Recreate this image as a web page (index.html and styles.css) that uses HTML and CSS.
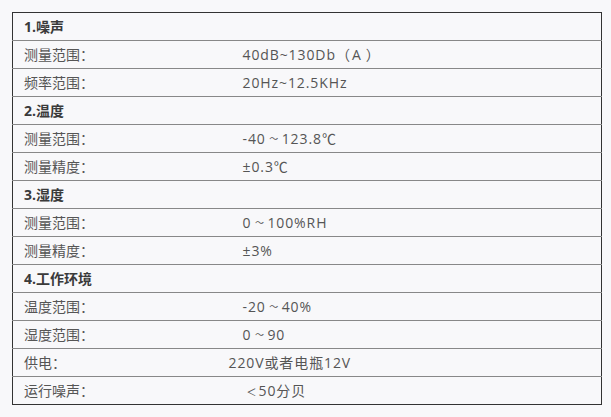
FILE: index.html
```html
<!DOCTYPE html>
<html lang="zh-CN">
<head>
<meta charset="utf-8">
<title>技术参数</title>
<link rel="stylesheet" href="styles.css">
</head>
<body>
<table class="spec">
  <colgroup><col class="c-label"><col class="c-value"></colgroup>
  <tr class="head"><td colspan="2">1.噪声</td></tr>
  <tr><td>测量范围：</td><td class="val">40dB~130Db<span class="po">（</span>A<span class="pc">）</span></td></tr>
  <tr><td>频率范围：</td><td class="val">20Hz~12.5KHz</td></tr>
  <tr class="head"><td colspan="2">2.温度</td></tr>
  <tr><td>测量范围：</td><td class="val">-40<span class="t">～</span>123.8℃</td></tr>
  <tr><td>测量精度：</td><td class="val">±0.3℃</td></tr>
  <tr class="head"><td colspan="2">3.湿度</td></tr>
  <tr><td>测量范围：</td><td class="val">0<span class="t">～</span>100%RH</td></tr>
  <tr><td>测量精度：</td><td class="val">±3%</td></tr>
  <tr class="head"><td colspan="2">4.工作环境</td></tr>
  <tr><td>温度范围：</td><td class="val">-20<span class="t">～</span>40%</td></tr>
  <tr><td>湿度范围：</td><td class="val">0<span class="t">～</span>90</td></tr>
  <tr><td>供电：</td><td class="val wide">220V或者电瓶12V</td></tr>
  <tr class="last"><td>运行噪声：</td><td class="val"><span class="lt">＜</span>50分贝</td></tr>
</table>
</body>
</html>
```
FILE: styles.css
```css
html, body {
  margin: 0;
  background: #f8f8fa;
}
body {
  padding: 12px;
  font-family: "Open Sans", "Noto Sans CJK SC", sans-serif;
  font-size: 14px;
  color: #555;
}
.spec {
  width: 590px;
  border-collapse: collapse;
  border: 1px solid #333;
  table-layout: fixed;
}
.c-label { width: 214px; }
.spec td {
  box-sizing: border-box;
  height: 28px;
  padding: 0 0 0 11px;
  border-bottom: 1px solid #888;
  line-height: 18px;
  white-space: nowrap;
  vertical-align: middle;
}
.spec tr.last td { border-bottom: none; }
.spec td.val { padding-left: 16px; letter-spacing: 0.9px; }
.spec td.wide { padding-left: 2px; }
.head td {
  font-weight: bold;
  color: #3a3a3a;
}
.t {
  display: inline-block;
  width: 16px;
  line-height: 1;
  text-align: center;
  font-size: 9px;
  letter-spacing: 0;
  vertical-align: 2px;
}
.lt {
  display: inline-block;
  width: 14px;
  line-height: 1;
  text-align: right;
  font-size: 10px;
  letter-spacing: 0;
  padding-right: 2px;
}
.po, .pc {
  letter-spacing: 0;
}
.po { margin-right: 2px; }
.pc { margin-left: 4px; }
```
